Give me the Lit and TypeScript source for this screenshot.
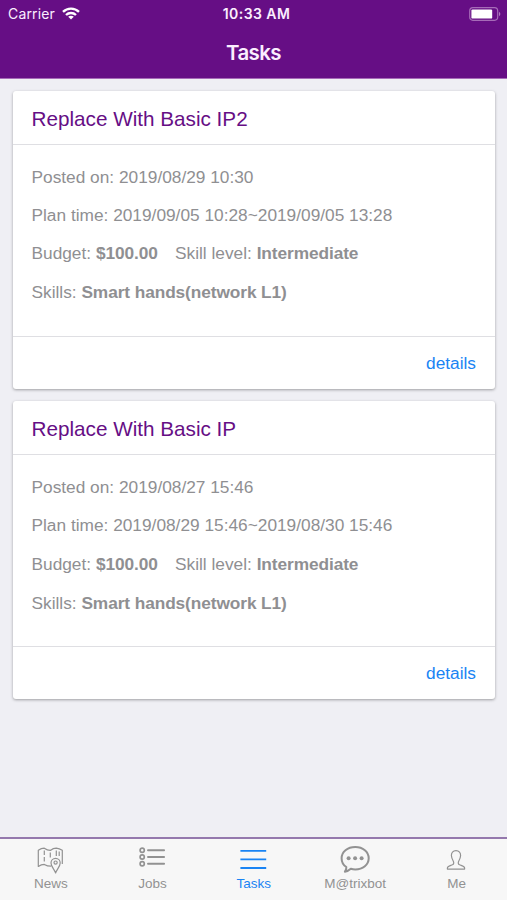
import { LitElement, html, css, svg } from "lit";
import { customElement, property } from "lit/decorators.js";

interface Task {
  title: string;
  posted: string;
  plan: string;
  budget: string;
  level: string;
  skills: string;
}

const tasks: Task[] = [
  {
    title: "Replace With Basic IP2",
    posted: "2019/08/29 10:30",
    plan: "2019/09/05 10:28~2019/09/05 13:28",
    budget: "$100.00",
    level: "Intermediate",
    skills: "Smart hands(network L1)",
  },
  {
    title: "Replace With Basic IP",
    posted: "2019/08/27 15:46",
    plan: "2019/08/29 15:46~2019/08/30 15:46",
    budget: "$100.00",
    level: "Intermediate",
    skills: "Smart hands(network L1)",
  },
];

const newsIcon = svg`
  <g fill="none" stroke="currentColor" stroke-width="1.2" stroke-linejoin="round">
    <path d="M16 20.2Q12.3 20.2 9.3 18.4Q6.3 18.4 3.3 20.4V4.2Q6.3 2.2 9.3 2.2Q12.3 4.4 15.3 4.4Q18.3 2.2 21.3 2.2Q24.3 2.6 27.3 4.2V18"/>
    <path d="M9.3 4.5V9M9.3 11V15.5M15.3 6.5V11.5M21.3 4.5V10M24.2 5.6V10"/>
    <path d="M20.6 27C19.3 23.4 16 20.4 16 16.9A4.6 4.6 0 0 1 25.2 16.9C25.2 20.4 21.9 23.4 20.6 27Z"/>
    <circle cx="20.6" cy="16.6" r="1.6"/>
  </g>`;

const jobsIcon = svg`
  <g fill="none" stroke="currentColor">
    <g stroke-width="1.7">
      <circle cx="5.2" cy="4.2" r="2.1"/>
      <circle cx="5.2" cy="11" r="2.1"/>
      <circle cx="5.2" cy="17.8" r="2.1"/>
    </g>
    <path stroke-width="1.9" stroke-linecap="round" d="M11 4.2H27.1M11 11H27.1M11 17.8H27.1"/>
  </g>`;

const tasksIcon = svg`
  <path fill="none" stroke="currentColor" stroke-width="1.8" d="M2.4 4.8H28.2M2.4 13.4H28.2M2.4 22H28.2"/>`;

const botIcon = svg`
  <path fill="none" stroke="currentColor" stroke-width="2" stroke-linejoin="round"
    d="M15.3 1C22.9 1 28.7 5.9 28.7 12.2S22.9 23.4 15.3 23.4C13.7 23.4 12.2 23.2 10.8 22.8C9.2 24.3 7 25.4 4.9 25.7C5.9 24.4 6.5 22.8 6.3 21C3.3 19 1.6 15.8 1.6 12.2C1.6 5.9 7.4 1 15.3 1Z"/>
  <g fill="currentColor">
    <circle cx="8.6" cy="12.3" r="2"/>
    <circle cx="15.1" cy="12.3" r="2"/>
    <circle cx="21.6" cy="12.3" r="2"/>
  </g>`;

const meIcon = svg`
  <path fill="none" stroke="currentColor" stroke-width="1.2" stroke-linejoin="round"
    d="M15 4.7C11.9 4.7 10.3 6.8 10.4 9.6C10.5 12.1 11.4 13.8 12.3 15.2C13.1 16.7 12.8 18.2 11.4 18.8C8.9 19.8 6.4 20.2 6.4 22V23.1H23.6V22C23.6 20.2 21.1 19.8 18.6 18.8C17.2 18.2 16.9 16.7 17.7 15.2C18.6 13.8 19.5 12.1 19.6 9.6C19.7 6.8 18.1 4.7 15 4.7Z"/>`;

const tabs = [
  { label: "News", icon: newsIcon },
  { label: "Jobs", icon: jobsIcon },
  { label: "Tasks", icon: tasksIcon },
  { label: "M@trixbot", icon: botIcon },
  { label: "Me", icon: meIcon },
];

@customElement("task-card")
class TaskCard extends LitElement {
  @property({ attribute: false }) task!: Task;

  static styles = css`
    :host {
      display: block;
      height: 298px;
      background: #fff;
      border-radius: 3px;
      box-shadow: 0 1px 3px rgba(0, 0, 0, 0.34);
      color: #8f8f92;
      font-size: 17.3px;
    }
    .card {
      display: flex;
      flex-direction: column;
      height: 100%;
      box-sizing: border-box;
    }
    .title {
      height: 53px;
      line-height: 56px;
      padding: 0 18.5px;
      color: #660e85;
      font-size: 20.7px;
      border-bottom: 1px solid #dfdfe3;
    }
    .body {
      flex: 1;
      padding: 13px 18.5px 0;
    }
    .row {
      height: 38.2px;
      line-height: 39px;
      white-space: pre;
    }
    .row:last-child {
      padding-top: 0.8px;
    }
    b {
      letter-spacing: -0.09px;
    }
    .level {
      margin-left: 17.3px;
    }
    .footer {
      height: 52px;
      line-height: 53px;
      padding: 0 19px;
      text-align: right;
      border-top: 1px solid #dfdfe3;
      color: #1a84f4;
    }
  `;

  render() {
    const t = this.task;
    return html`<div class="card">
      <div class="title">${t.title}</div>
      <div class="body">
        <div class="row">Posted on: ${t.posted}</div>
        <div class="row">Plan time: ${t.plan}</div>
        <div class="row">Budget: <b>${t.budget}</b><span class="level">Skill level: <b>${t.level}</b></span></div>
        <div class="row">Skills: <b>${t.skills}</b></div>
      </div>
      <div class="footer">details</div>
    </div>`;
  }
}

@customElement("app-root")
class AppRoot extends LitElement {
  static styles = css`
    :host {
      display: flex;
      flex-direction: column;
      height: 900px;
      background: #efeff4;
      font-family: "Liberation Sans", Arial, sans-serif;
      overflow: hidden;
    }
    .top {
      height: 78px;
      background: #660e85;
      border-bottom: 1px solid #a66bb8;
      color: #fbeeff;
      font-family: Inter, sans-serif;
    }
    .status {
      display: grid;
      grid-template-columns: 1fr auto 1fr;
      align-items: center;
      height: 27px;
      padding: 0 6px 0 8px;
      font-size: 14px;
    }
    .carrier {
      display: flex;
      align-items: center;
      gap: 7px;
      letter-spacing: 0.15px;
    }
    .time {
      font-weight: 600;
      font-size: 14px;
      letter-spacing: 0.45px;
      padding-left: 4px;
    }
    .battery {
      justify-self: end;
    }
    .heading {
      height: 51px;
      line-height: 51px;
      text-align: center;
      font-size: 20.5px;
      font-weight: 600;
      letter-spacing: -0.6px;
    }
    .list {
      flex: 1;
      display: flex;
      flex-direction: column;
      gap: 12.3px;
      padding: 12px 12px 0 13px;
    }
    .tabs {
      display: grid;
      grid-template-columns: repeat(5, 1fr);
      height: 61px;
      border-top: 2px solid #9478ad;
      background: #f7f7f7;
    }
    .tab {
      display: flex;
      flex-direction: column;
      align-items: center;
      color: #929292;
      font-size: 13.5px;
      line-height: 16px;
      padding: 7px 0 0 0.6px;
    }
    .tab svg {
      margin-bottom: 2px;
    }
    .tab.active {
      color: #1a84f4;
    }
    svg {
      display: block;
      flex: none;
    }
  `;

  render() {
    return html`
      <div class="top">
        <div class="status">
          <div class="carrier">
            <span>Carrier</span>
            <svg width="18" height="13" viewBox="0 0 18 13">
              <g fill="none" stroke="#fff" stroke-width="2.3">
                <path d="M1 4.9C5.4 0.4 12.6 0.4 17 4.9" />
                <path d="M4 8C6.8 5.3 11.2 5.3 14 8" />
              </g>
              <path fill="#fff" d="M9 12.6L6.2 9.7C7.8 8.3 10.2 8.3 11.8 9.7Z" />
            </svg>
          </div>
          <div class="time">10:33 AM</div>
          <svg class="battery" width="32" height="14" viewBox="0 0 32 14">
            <rect x="0.7" y="0.7" width="28" height="12.6" rx="3.2" fill="none" stroke="#a66bb8" stroke-width="1.2" />
            <rect x="2.4" y="2.4" width="20.8" height="9.2" rx="1.2" fill="#fff" />
            <path d="M30.1 4.8C31.7 5.5 31.7 8.5 30.1 9.2Z" fill="#b98cc8" />
          </svg>
        </div>
        <div class="heading">Tasks</div>
      </div>
      <div class="list">${tasks.map((t) => html`<task-card .task=${t}></task-card>`)}</div>
      <div class="tabs">
        ${tabs.map(
          (t) => html`<div class="tab ${t.label === "Tasks" ? "active" : ""}">
            <svg width="31" height="28" viewBox="0 0 31 28">${t.icon}</svg>
            <span>${t.label}</span>
          </div>`
        )}
      </div>
    `;
  }
}
